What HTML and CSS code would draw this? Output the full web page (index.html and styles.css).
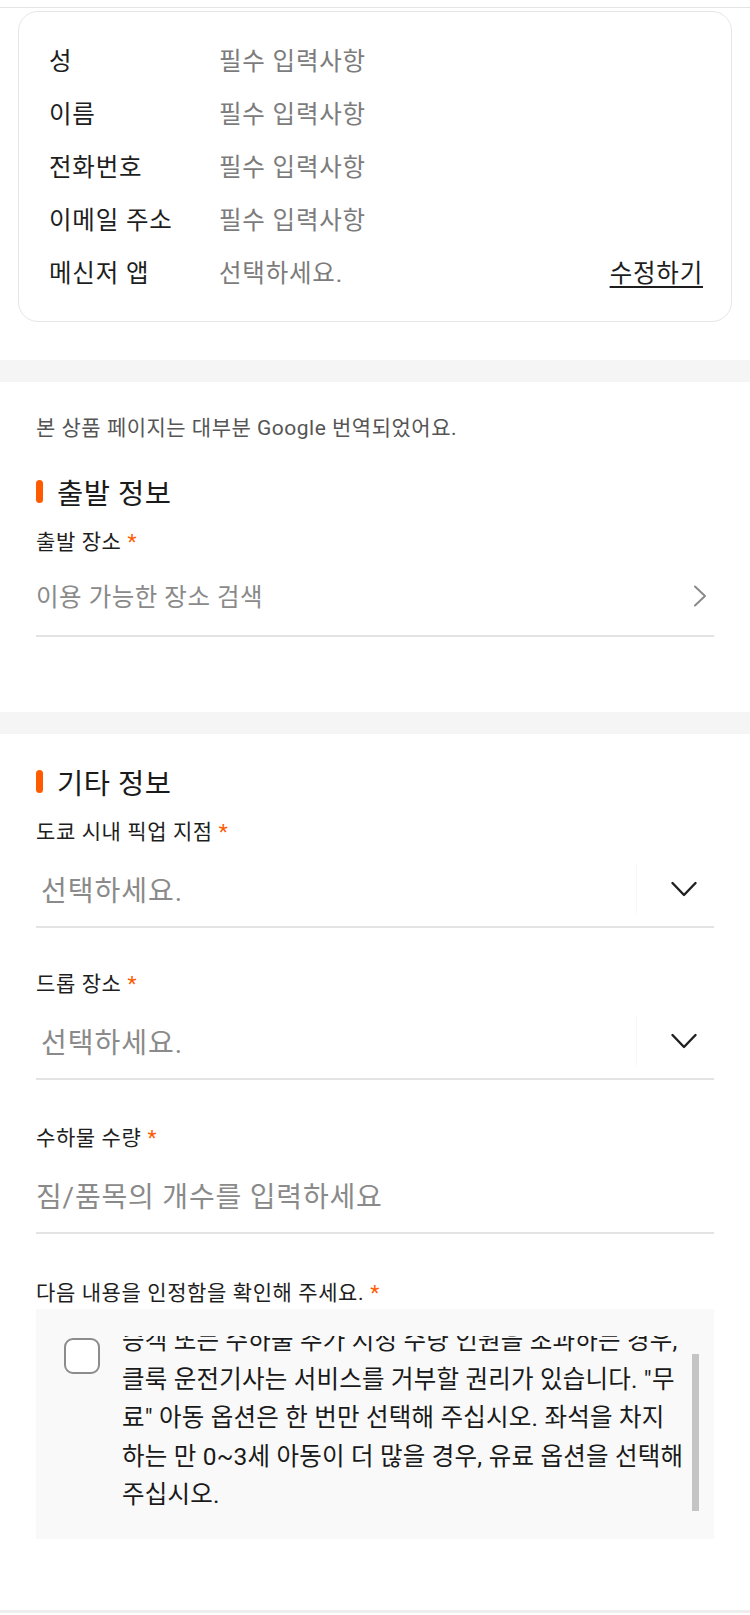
FILE: index.html
```html
<!DOCTYPE html>
<html lang="ko">
<head>
<meta charset="utf-8">
<title>예약 정보</title>
<link rel="stylesheet" href="styles.css">
</head>
<body>
<div class="topbar"></div>
<div class="card">
  <div class="row"><span class="k">성</span><span class="v">필수 입력사항</span></div>
  <div class="row"><span class="k">이름</span><span class="v">필수 입력사항</span></div>
  <div class="row"><span class="k">전화번호</span><span class="v">필수 입력사항</span></div>
  <div class="row"><span class="k">이메일 주소</span><span class="v">필수 입력사항</span></div>
  <div class="row"><span class="k">메신저 앱</span><span class="v">선택하세요.</span><a class="edit">수정하기</a></div>
</div>
<div class="gap"></div>
<section class="sec sec-start">
  <p class="notice">본 상품 페이지는 대부분 Google 번역되었어요.</p>
  <h2 class="heading"><span class="bar"></span>출발 정보</h2>
  <div class="label label-first">출발 장소<span class="req">*</span></div>
  <div class="field field-link">
    <span class="ph">이용 가능한 장소 검색</span>
    <svg class="chev-right" width="14" height="22" viewBox="0 0 14 22"><path d="M2 1.5 L12 11 L2 20.5" fill="none" stroke="#8a8a8a" stroke-width="2" stroke-linecap="round" stroke-linejoin="round"/></svg>
  </div>
</section>
<div class="gap"></div>
<section class="sec sec-etc">
  <h2 class="heading heading-etc"><span class="bar"></span>기타 정보</h2>
  <div class="label label-first">도쿄 시내 픽업 지점<span class="req">*</span></div>
  <div class="field field-select">
    <span class="ph ph-select">선택하세요.</span>
    <span class="drop"><svg width="26" height="16" viewBox="0 0 26 16"><path d="M1.5 2 L13 14 L24.5 2" fill="none" stroke="#1f1f1f" stroke-width="2.4" stroke-linecap="round" stroke-linejoin="round"/></svg></span>
  </div>
  <div class="label">드롭 장소<span class="req">*</span></div>
  <div class="field field-select">
    <span class="ph ph-select">선택하세요.</span>
    <span class="drop"><svg width="26" height="16" viewBox="0 0 26 16"><path d="M1.5 2 L13 14 L24.5 2" fill="none" stroke="#1f1f1f" stroke-width="2.4" stroke-linecap="round" stroke-linejoin="round"/></svg></span>
  </div>
  <div class="label label-qty">수하물 수량<span class="req">*</span></div>
  <div class="field field-input">
    <span class="ph ph-input">짐/품목의 개수를 입력하세요</span>
  </div>
  <div class="label label-agree">다음 내용을 인정함을 확인해 주세요.<span class="req">*</span></div>
  <div class="agree">
    <span class="checkbox"></span>
    <div class="scroll">
      <p class="terms">승객 또는 수하물 추가 지정 수량 인원을 초과하는 경우,<br>클룩 운전기사는 서비스를 거부할 권리가 있습니다. "무<br>료" 아동 옵션은 한 번만 선택해 주십시오. 좌석을 차지<br>하는 만 0~3세 아동이 더 많을 경우, 유료 옵션을 선택해<br>주십시오.</p>
    </div>
    <span class="thumb"></span>
  </div>
</section>
<div class="bottomline"></div>
</body>
</html>
```
FILE: styles.css
```css
* { box-sizing: border-box; }
html, body { margin: 0; padding: 0; background: #ffffff; }
body {
  width: 750px;
  font-family: Roboto, "Noto Sans CJK KR", sans-serif;
  color: #222222;
}

.topbar {
  height: 8px;
  border-bottom: 1px solid #e4e4e4;
}

.card {
  margin: 3px 18px 38px;
  height: 311px;
  border: 1px solid #e6e6e6;
  border-radius: 20px;
  padding: 21px 28px 23px 30px;
}
.row {
  display: flex;
  align-items: center;
  height: 53px;
  font-size: 24.5px;
  letter-spacing: 0.8px;
}
.k { width: 170px; color: #1e1e1e; }
.v { flex: 1; color: #7c7c7c; }
.edit {
  color: #1e1e1e;
  text-decoration: underline;
  text-underline-offset: 4px;
  text-decoration-thickness: 2px;
}

.gap { height: 22px; background: #f5f5f5; }

.sec { padding: 0 36px; }
.sec-start { padding-bottom: 75px; }
.sec-etc { padding-bottom: 71px; }

.notice {
  margin: 32px 0 0;
  font-size: 21px;
  line-height: 28px;
  letter-spacing: 0.5px;
  color: #555555;
}

.heading {
  display: flex;
  align-items: center;
  margin: 31px 0 0;
  height: 36px;
  font-size: 28.5px;
  letter-spacing: 0.5px;
  font-weight: 400;
  color: #1a1a1a;
}
.heading-etc { margin-top: 29px; }
.bar {
  width: 7px;
  height: 23px;
  border-radius: 4px;
  background: #ff5a00;
  margin-right: 14px;
}

.label {
  margin-top: 42px;
  font-size: 21px;
  line-height: 28px;
  letter-spacing: 0.6px;
  color: #1e1e1e;
}
.label-first { margin-top: 19px; }
.label-qty { margin-top: 44px; }
.label-agree { margin-top: 45px; }
.req { color: #ff5a00; margin-left: 6px; }

.field {
  display: flex;
  align-items: center;
  border-bottom: 2px solid #e3e3e3;
}
.field-link { height: 81px; }
.field-select { height: 82px; padding-top: 5px; }
.field-input { height: 82px; padding-top: 6px; }

.ph { flex: 1; color: #8a8a8a; }
.field-link .ph { font-size: 24.5px; letter-spacing: 0.5px; }
.ph-select { font-size: 28px; letter-spacing: 1px; padding-left: 5px; }
.ph-input { font-size: 28px; letter-spacing: 0.8px; }

.chev-right { margin-right: 7px; }

.drop {
  display: flex;
  align-items: center;
  justify-content: flex-end;
  width: 78px;
  height: 52px;
  padding-right: 17px;
  border-left: 1px solid #f7f7f7;
}

.agree {
  position: relative;
  display: flex;
  align-items: flex-start;
  margin-top: 2px;
  height: 230px;
  padding: 27px 0 0 28px;
  background: #f9f9f9;
}
.checkbox {
  flex: none;
  width: 36px;
  height: 36px;
  margin-top: 2px;
  margin-right: 22px;
  border: 2px solid #8c8c8c;
  border-radius: 9px;
  background: #ffffff;
}
.scroll {
  flex: 1;
  height: 177px;
  overflow: hidden;
}
.terms {
  margin: -14px 0 0;
  font-size: 24.5px;
  line-height: 38.5px;
  letter-spacing: 0.2px;
  white-space: nowrap;
  color: #1a1a1a;
}
.thumb {
  position: absolute;
  left: 656px;
  top: 45px;
  width: 7px;
  height: 157px;
  background: #c4c4c4;
}

.bottomline { height: 3px; background: #eeeeee; }
```
